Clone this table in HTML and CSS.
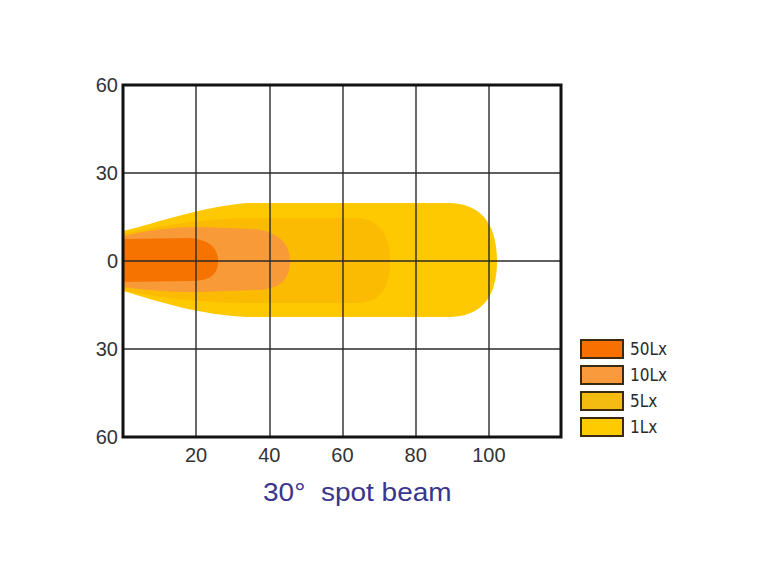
FILE: index.html
```html
<!DOCTYPE html>
<html lang="en">
<head>
<meta charset="utf-8">
<title>30° spot beam</title>
<link rel="stylesheet" href="styles.css">
</head>
<body>
<main class="chart">
  <div class="y-axis">
    <span>60</span>
    <span>30</span>
    <span>0</span>
    <span>30</span>
    <span>60</span>
  </div>
  <svg class="plot" width="444" height="358" viewBox="120 82 444 358" aria-label="beam pattern">
    <path class="lx1" d="M123,231 C160,222 200,207 248,203 L448,203 C482,203 497,225 497,261 C497,297 482,317 448,317 L248,317 C200,315 160,302 123,291 Z"/>
    <path class="lx5" d="M123,234 C150,228 190,220 240,218 L358,218 C383,220 390,240 390,261 C390,284 383,302 358,303 L240,303 C190,302 150,296 123,290 Z"/>
    <path class="lx10" d="M123,236 C150,230 175,227 200,227 L255,229 C280,232 290,245 290,261 C290,279 280,289 258,290 L200,292 C170,292 145,290 123,287 Z"/>
    <path class="lx50" d="M123,239 L190,238 C210,240 218,248 218,261 C218,275 210,281 190,281 L123,282 Z"/>
    <g class="grid">
      <line x1="196" y1="85" x2="196" y2="437"/>
      <line x1="270" y1="85" x2="270" y2="437"/>
      <line x1="343" y1="85" x2="343" y2="437"/>
      <line x1="416" y1="85" x2="416" y2="437"/>
      <line x1="489" y1="85" x2="489" y2="437"/>
      <line x1="123" y1="173" x2="561" y2="173"/>
      <line x1="123" y1="261" x2="561" y2="261"/>
      <line x1="123" y1="349" x2="561" y2="349"/>
    </g>
    <rect class="frame" x="123" y="85" width="438" height="352"/>
  </svg>
  <ul class="legend">
    <li><span class="swatch s50"></span>50Lx</li>
    <li><span class="swatch s10"></span>10Lx</li>
    <li><span class="swatch s5"></span>5Lx</li>
    <li><span class="swatch s1"></span>1Lx</li>
  </ul>
  <div class="x-axis">
    <span>20</span>
    <span>40</span>
    <span>60</span>
    <span>80</span>
    <span>100</span>
  </div>
  <h1 class="title">30°&nbsp;&nbsp;spot beam</h1>
</main>
</body>
</html>
```

FILE: styles.css
```css
html, body {
  margin: 0;
  padding: 0;
  background: #ffffff;
}

body {
  width: 768px;
  height: 580px;
  overflow: hidden;
  font-family: "Liberation Sans", Arial, sans-serif;
}

.chart {
  display: grid;
  grid-template-columns: 120px 444px 1fr;
  grid-template-rows: 358px auto auto;
  padding-top: 82px;
}

.y-axis {
  display: flex;
  flex-direction: column;
  justify-content: space-between;
  align-items: flex-end;
  height: 372px;
  margin-top: -7px;
  padding-right: 2px;
  color: #333333;
  font-size: 20px;
  line-height: 20px;
}

.plot {
  display: block;
}

.lx1 { fill: #fec900; }
.lx5 { fill: #fbbb02; }
.lx10 { fill: #f99a38; }
.lx50 { fill: #f67300; }

.grid line {
  stroke: #2a2a2a;
  stroke-width: 1.4;
}

.frame {
  fill: none;
  stroke: #111111;
  stroke-width: 3;
}

.legend {
  list-style: none;
  margin: 257px 0 0 16px;
  padding: 0;
  display: flex;
  flex-direction: column;
  gap: 6px;
  font-family: "DejaVu Sans Condensed", "DejaVu Sans", sans-serif;
  font-stretch: condensed;
  font-size: 17px;
  color: #2a2a2a;
}

.legend li {
  display: flex;
  align-items: center;
  gap: 6px;
  height: 20px;
}

.swatch {
  display: block;
  width: 44px;
  height: 20px;
  box-sizing: border-box;
  border: 2px solid #3a2a12;
}

.s50 { background: #f77000; }
.s10 { background: #f99a3d; }
.s5 { background: #f4bb10; }
.s1 { background: #fdcb00; }

.x-axis {
  grid-column: 2;
  display: flex;
  margin: 5px 0 0 39.5px;
  color: #333333;
  font-size: 20px;
  line-height: 20px;
}

.x-axis span {
  width: 73.2px;
  text-align: center;
}

.title {
  grid-column: 2;
  justify-self: start;
  width: max-content;
  margin: 12px 0 0 143px;
  font-size: 25px;
  line-height: 30px;
  font-weight: normal;
  color: #3a358e;
  transform: scaleX(1.12);
  transform-origin: left center;
  white-space: nowrap;
}
```
